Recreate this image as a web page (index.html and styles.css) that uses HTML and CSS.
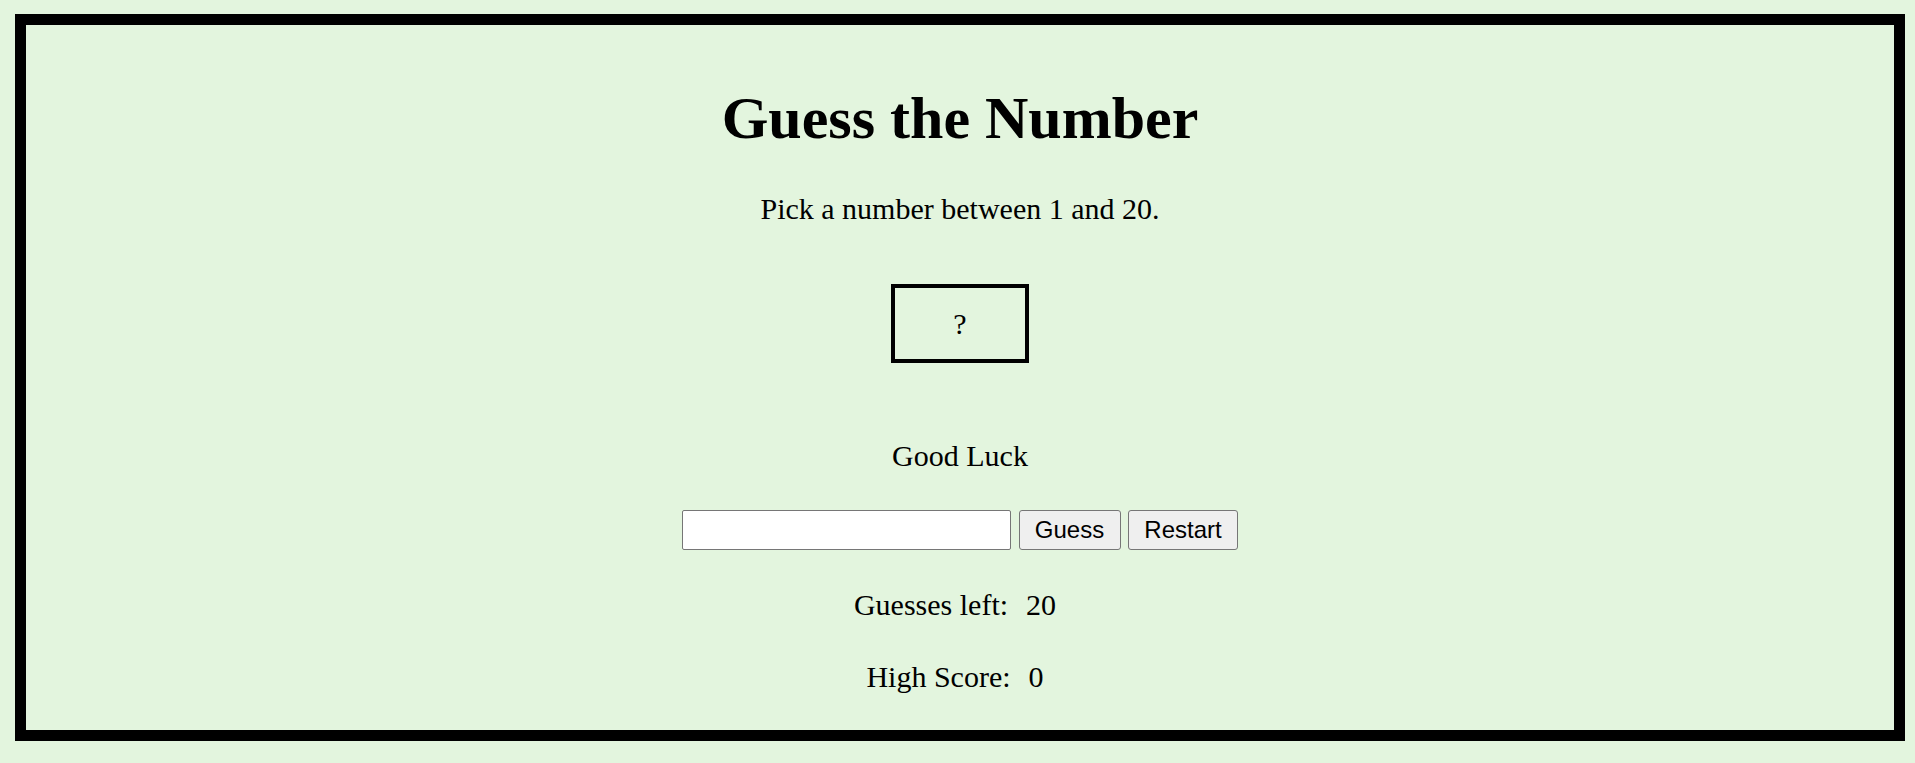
FILE: index.html
```html
<!DOCTYPE html>
<html lang="en">
<head>
<meta charset="utf-8">
<title>Guess the Number</title>
<link rel="stylesheet" href="styles.css">
</head>
<body>
<main class="game">
  <h1 class="title">Guess the Number</h1>
  <p class="intro">Pick a number between 1 and 20.</p>
  <div class="secret">?</div>
  <p class="message">Good Luck</p>
  <div class="controls">
    <input class="guess-input" type="text">
    <button class="btn">Guess</button>
    <button class="btn">Restart</button>
  </div>
  <p class="stat stat-guesses"><span class="label">Guesses left:</span><span class="value">20</span></p>
  <p class="stat stat-score"><span class="label">High Score:</span><span class="value">0</span></p>
</main>
</body>
</html>
```

FILE: styles.css
```css
html, body {
  margin: 0;
  padding: 0;
  background: #e3f5de;
}
body {
  padding: 14px 10px 22px 15px;
  font-family: "Liberation Serif", "Times New Roman", serif;
  color: #000;
}
.game {
  border: 11px solid #000;
  box-sizing: border-box;
  height: 727px;
  display: flex;
  flex-direction: column;
  align-items: center;
}
.title {
  margin: 59px 0 0;
  font-size: 60px;
  font-weight: bold;
  line-height: normal;
}
.intro {
  margin: 39px 0 0;
  font-size: 30px;
  line-height: normal;
}
.secret {
  margin-top: 58px;
  width: 138px;
  height: 79px;
  box-sizing: border-box;
  border: 4px solid #000;
  display: flex;
  align-items: center;
  justify-content: center;
  font-size: 30px;
}
.message {
  margin: 76px 0 0;
  font-size: 30px;
  line-height: normal;
}
.controls {
  margin-top: 37px;
  display: flex;
  gap: 7.5px;
  align-items: stretch;
}
.guess-input {
  width: 329px;
  height: 40px;
  box-sizing: border-box;
  border: 1px solid #767676;
  border-radius: 2px;
  background: #fff;
  font-size: 24px;
  padding: 2px 4px;
  margin: 0;
}
.btn {
  font-family: "Liberation Sans", Arial, sans-serif;
  font-size: 24px;
  height: 40px;
  padding: 0 15.3px;
  margin: 0;
  background: #efefef;
  border: 1px solid #767676;
  border-radius: 3px;
  color: #000;
}
.stat {
  font-size: 30px;
  line-height: normal;
  display: flex;
  gap: 18px;
  padding-right: 10px;
}
.stat-guesses {
  margin: 38px 0 0;
}
.stat-score {
  margin: 38px 0 0;
}
```
